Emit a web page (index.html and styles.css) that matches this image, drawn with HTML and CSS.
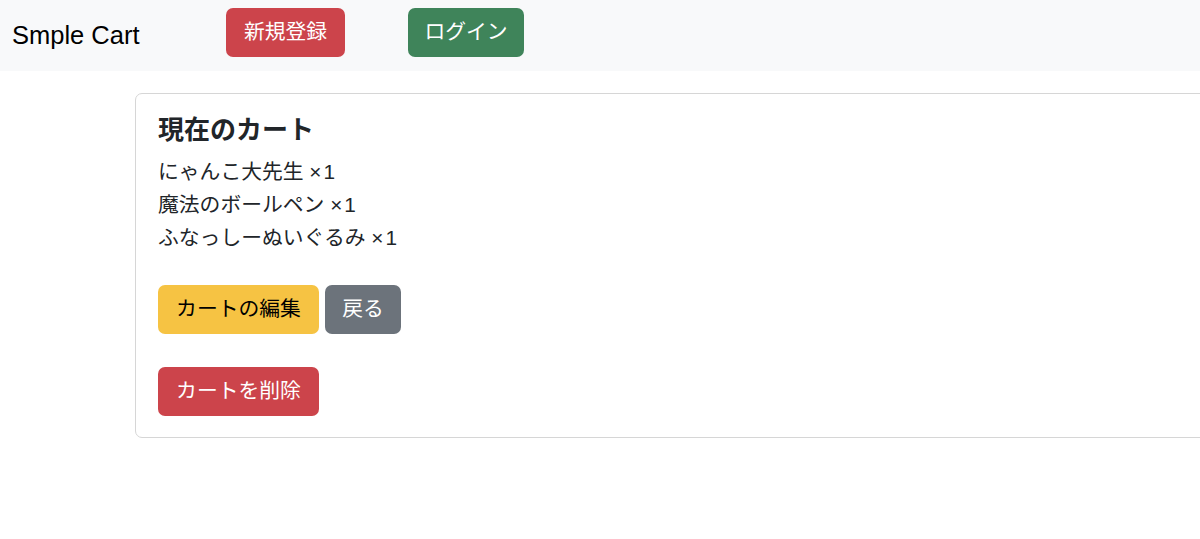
FILE: index.html
```html
<!DOCTYPE html>
<html lang="ja">
<head>
<meta charset="utf-8">
<title>Smple Cart</title>
<link rel="stylesheet" href="styles.css">
</head>
<body>
<nav class="navbar">
  <span class="brand">Smple Cart</span>
  <a class="btn btn-danger nav-signup">新規登録</a>
  <a class="btn btn-success nav-login">ログイン</a>
</nav>
<main class="container">
  <section class="card">
    <h5 class="card-title">現在のカート</h5>
    <ul class="items">
      <li>にゃんこ大先生 <span class="qty">×1</span></li>
      <li>魔法のボールペン <span class="qty">×1</span></li>
      <li>ふなっしーぬいぐるみ <span class="qty">×1</span></li>
    </ul>
    <div class="row-actions">
      <a class="btn btn-warning">カートの編集</a>
      <a class="btn btn-secondary">戻る</a>
    </div>
    <div class="row-actions delete-row">
      <a class="btn btn-danger">カートを削除</a>
    </div>
  </section>
</main>
</body>
</html>
```

FILE: styles.css
```css
* { box-sizing: border-box; }
html, body { margin: 0; padding: 0; }
body {
  font-family: "Liberation Sans", "Noto Sans CJK JP", sans-serif;
  font-size: 20.8px;
  line-height: 1.5;
  color: #212529;
  background: #fff;
  width: 1200px;
  height: 539px;
  overflow: hidden;
}
.navbar {
  height: 71px;
  background: #f8f9fa;
  display: flex;
  align-items: flex-start;
  padding: 0 0 0 12px;
}
.brand {
  font-size: 25.5px;
  line-height: 32px;
  color: #000;
  margin-top: 19px;
  width: 214px;
}
.btn {
  display: inline-flex;
  align-items: center;
  justify-content: center;
  height: 49px;
  padding: 0 15px;
  font-size: 20.8px;
  line-height: 1;
  border-radius: 7px;
  color: #fff;
  text-decoration: none;
  cursor: pointer;
}
.nav-signup { margin-top: 8px; width: 119px; }
.nav-login { margin-top: 8px; margin-left: 63px; width: 116px; }
.btn-danger { background: #cc444b; }
.btn-success { background: #3f845a; }
.btn-warning { background: #f6c343; color: #000; }
.btn-secondary { background: #6c737b; }
.container {
  padding: 22px 0 0 135px;
}
.card {
  width: 1100px;
  border: 1.3px solid #d6d6d6;
  border-radius: 7px;
  padding: 20px 20px 21px 22px;
}
.card-title {
  margin: 0 0 10px;
  font-size: 26px;
  font-weight: 700;
  line-height: 32px;
}
.items {
  list-style: none;
  margin: 0;
  padding: 0;
}
.items li {
  line-height: 32px;
  height: 32px;
  margin-top: 1px;
}
.qty { letter-spacing: 2px; }
.row-actions {
  display: flex;
  gap: 6px;
  margin-top: 31px;
}
.row-actions .btn-warning { width: 161px; }
.row-actions .btn-secondary { width: 76px; }
.delete-row { margin-top: 33px; }
.delete-row .btn-danger { width: 161px; }
```
